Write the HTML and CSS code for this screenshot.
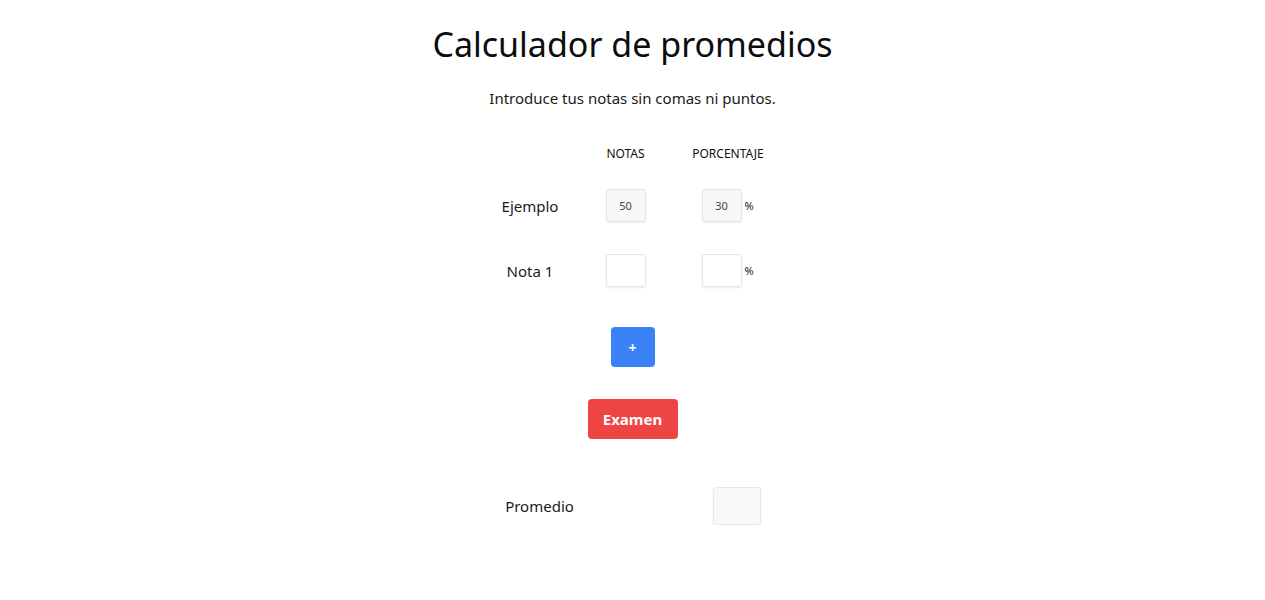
FILE: index.html
```html
<!DOCTYPE html>
<html lang="es">
<head>
<meta charset="utf-8">
<title>Calculador de promedios</title>
<link rel="stylesheet" href="styles.css">
</head>
<body>
<main class="page">
  <h1 class="title">Calculador de promedios</h1>
  <p class="subtitle">Introduce tus notas sin comas ni puntos.</p>

  <div class="grid">
    <div></div>
    <div class="head">NOTAS</div>
    <div class="head">PORCENTAJE</div>

    <div class="label">Ejemplo</div>
    <div class="cell"><input class="box sample" type="text" value="50" readonly></div>
    <div class="cell"><input class="box sample" type="text" value="30" readonly><span class="pct">%</span></div>

    <div class="label">Nota 1</div>
    <div class="cell"><input class="box" type="text"></div>
    <div class="cell"><input class="box" type="text"><span class="pct">%</span></div>
  </div>

  <button class="btn btn-add" type="button">+</button>
  <button class="btn btn-exam" type="button">Examen</button>

  <div class="result">
    <div class="label">Promedio</div>
    <div class="cell"><div class="result-box"></div></div>
  </div>
</main>
</body>
</html>
```

FILE: styles.css
```css
html, body {
  margin: 0;
  padding: 0;
  background: #ffffff;
}
body {
  font-family: "Noto Sans", "Open Sans", sans-serif;
  color: #111;
}
.page {
  display: flex;
  flex-direction: column;
  align-items: center;
  padding-top: 22px;
}
.title {
  margin: 0;
  font-size: 34px;
  line-height: 44px;
  font-weight: 400;
  color: #0c0c0c;
}
.subtitle {
  margin: 20px 0 0;
  font-size: 15px;
  line-height: 24px;
  color: #1a1a1a;
}
.grid {
  margin-top: 36px;
  display: grid;
  grid-template-columns: 95px 96px 109px;
  grid-template-rows: 16px 60px 65px;
  justify-items: center;
  align-items: end;
}
.head {
  font-size: 12px;
  line-height: 16px;
  color: #111;
}
.label {
  font-size: 15px;
  line-height: 20px;
  color: #1a1a1a;
}
.grid > .label {
  align-self: end;
  margin-bottom: 6px;
}
.cell {
  display: flex;
  align-items: center;
}
.box {
  box-sizing: border-box;
  width: 40px;
  height: 33px;
  margin: 0;
  padding: 0;
  border: 1px solid #e6e6e6;
  border-radius: 3px;
  box-shadow: 0 1px 2px rgba(0,0,0,0.08);
  background: #ffffff;
  font-family: inherit;
  font-size: 11px;
  color: #444;
  text-align: center;
  outline: none;
}
.box.sample {
  background: #f7f7f7;
}
.pct {
  margin-left: 3px;
  font-size: 11px;
  width: 10px;
  color: #222;
}
.btn {
  border: none;
  border-radius: 4px;
  color: #fff;
  font-family: inherit;
  font-weight: 700;
  height: 40px;
  padding: 0;
  cursor: pointer;
}
.btn-add {
  margin-top: 40px;
  width: 44px;
  background: #3b82f6;
  font-size: 14px;
}
.btn-exam {
  margin-top: 32px;
  width: 90px;
  background: #ef4444;
  font-size: 15px;
}
.result {
  margin-top: 48px;
  display: grid;
  grid-template-columns: 209px 186px;
  justify-items: center;
  align-items: center;
}
.result-box {
  box-sizing: border-box;
  width: 48px;
  height: 38px;
  border: 1px solid #e8e8e8;
  border-radius: 3px;
  background: #f9f9f9;
  box-shadow: 0 1px 2px rgba(0,0,0,0.08);
}
```
